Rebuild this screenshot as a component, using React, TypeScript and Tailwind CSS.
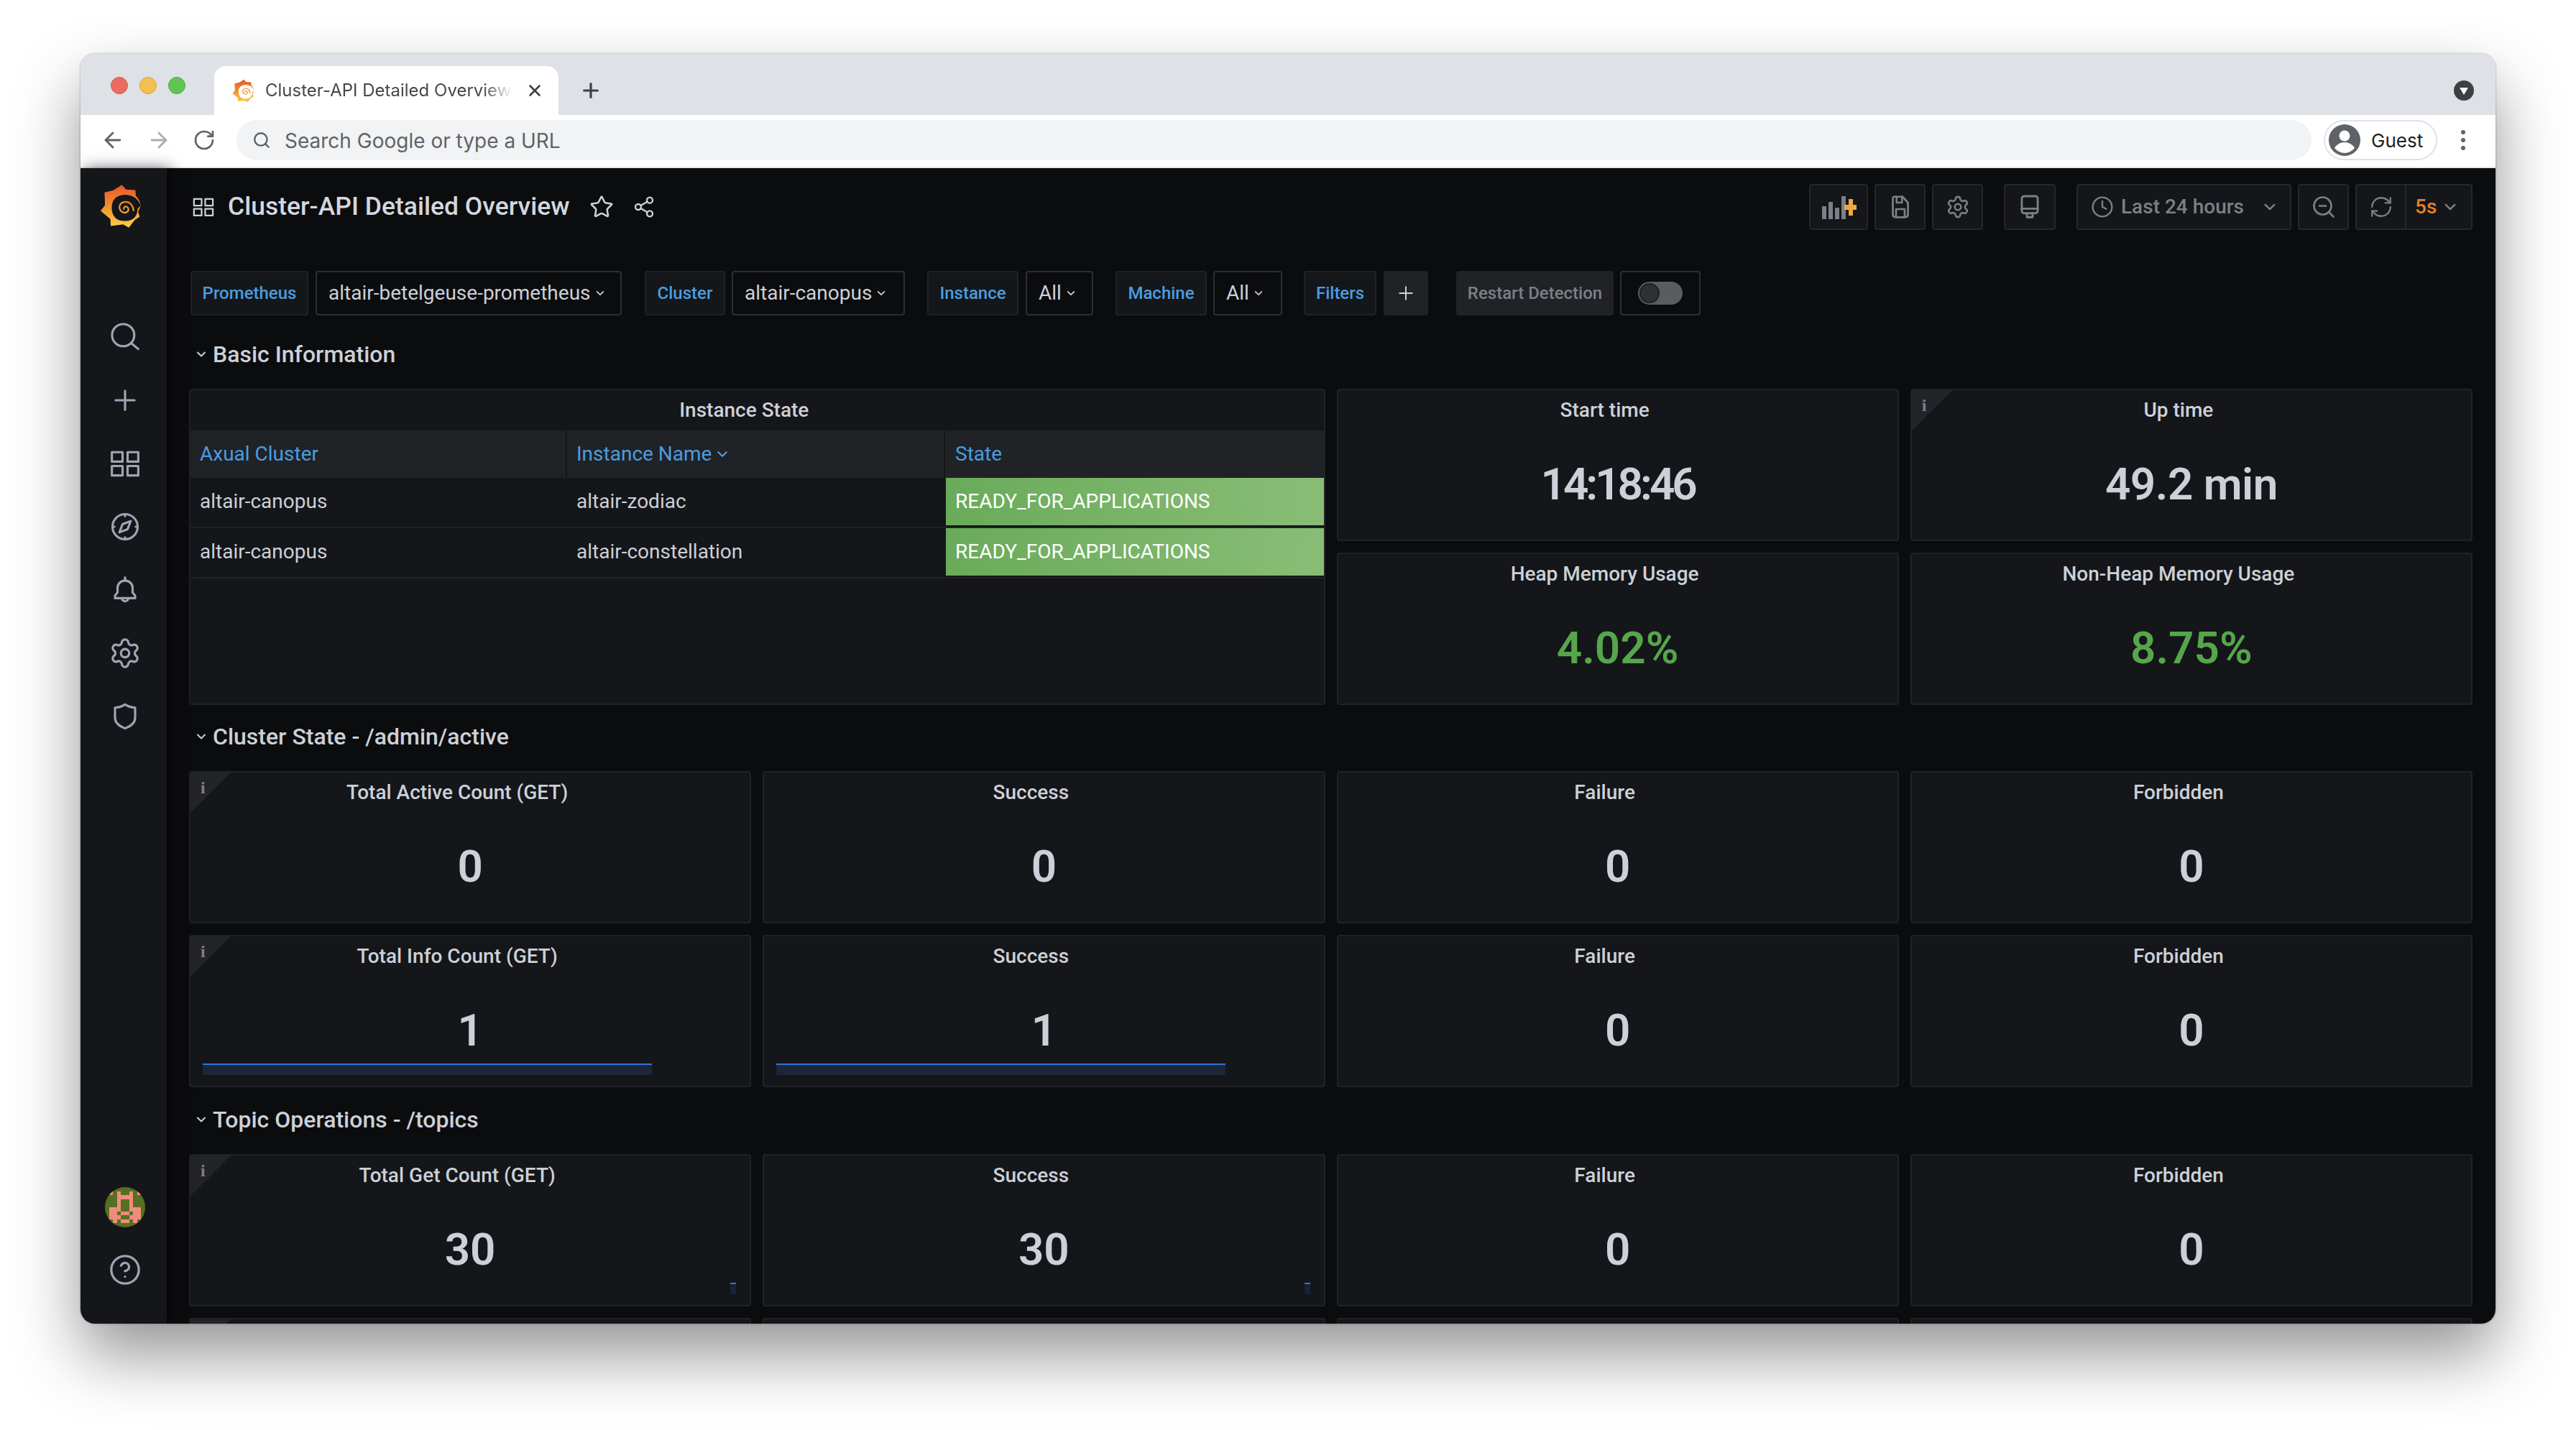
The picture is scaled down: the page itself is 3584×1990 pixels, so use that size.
import { ArrowLeft, ArrowRight, CircleHelp, Clock, Plus, RefreshCw, RotateCw, Search, Settings, Share2, Star, X, ZoomOut } from "lucide-react";

const ROBOTO = "font-['Roboto',sans-serif]";

function Chevron({ className }: { className: string }) {
	return (
		<svg viewBox="0 0 16 16" fill="none" stroke="currentColor" strokeWidth="2" strokeLinecap="round" strokeLinejoin="round" className={className}>
			<polyline points="3,5.5 8,10.5 13,5.5" />
		</svg>
	);
}

function GrafanaLogo({ id, hole, className }: { id: string; hole: string; className: string }) {
	return (
		<svg viewBox="25 45 180 190" className={className}>
			<defs>
				<linearGradient id={id} gradientUnits="userSpaceOnUse" x1="110" y1="50" x2="110" y2="232">
					<stop offset="0" stopColor="#e9582f" />
					<stop offset="0.45" stopColor="#ef8a2c" />
					<stop offset="1" stopColor="#fbd145" />
				</linearGradient>
			</defs>
			<path
				d="M120 48 L138 68 L178 70 L180 95 Q198 112 201 138 L190 165 L197 185 L175 200 L150 232 L125 218 L72 225 L70 195 L28 160 L47 135 L45 80 L82 72 Z"
				fill={`url(#${id})`}
			/>
			<path d="M201 138 Q186 92 134 90 Q76 92 76 148 Q78 204 134 204 Q186 202 188 150 L201 138 Z" fill={hole} />
			<path
				d="M128 152 Q128 138 141 142 Q153 150 145 163 Q131 174 116 161 Q104 146 114 130 Q128 116 150 124 Q167 134 170 158"
				fill="none"
				stroke={`url(#${id})`}
				strokeWidth="7"
				strokeLinecap="round"
			/>
		</svg>
	);
}

// identicon pixels, one string per row
const AVATAR_ROWS = ["..........", ".#.#..#.#.", "...####...", "...#..#...", "...#..#...", ".###..###.", ".##.##.##.", ".###..###.", "..#.##.#..", ".........."];

function Avatar() {
	return (
		<svg viewBox="0 0 10 10" shapeRendering="crispEdges" className="h-[56px] w-[56px] rounded-full bg-[#566f22]">
			{AVATAR_ROWS.map((row, y) =>
				row.split("").map((c, x) => (c === "#" ? <rect key={`${x}-${y}`} x={x} y={y} width="1" height="1" fill="#f08c7d" /> : null)),
			)}
		</svg>
	);
}

function NavIcon({ children }: { children: React.ReactNode }) {
	return <div className="flex h-[88px] w-full items-center justify-center pl-[4px] text-[#9da5b4]">{children}</div>;
}

function StrokeIcon({ children, className }: { children: React.ReactNode; className: string }) {
	return (
		<svg viewBox="0 0 24 24" fill="none" stroke="currentColor" strokeWidth="1.8" strokeLinecap="round" strokeLinejoin="round" className={className}>
			{children}
		</svg>
	);
}

function AppsIcon({ className }: { className: string }) {
	return (
		<StrokeIcon className={className}>
			<rect x="1.5" y="3" width="8.5" height="7.5" />
			<rect x="14" y="3" width="8.5" height="7.5" />
			<rect x="1.5" y="14" width="8.5" height="7.5" />
			<rect x="14" y="14" width="8.5" height="7.5" />
		</StrokeIcon>
	);
}

function Sidebar() {
	return (
		<aside className="relative z-10 flex w-[120px] shrink-0 flex-col bg-[#141619] shadow-[6px_0_20px_rgba(0,0,0,0.55)]">
			<div className="mb-[85px] flex h-[106px] items-center justify-center pr-[8px]">
				<GrafanaLogo id="side-logo" hole="#141619" className="h-[62px] w-[58px]" />
			</div>
			<NavIcon>
				<StrokeIcon className="h-[42px] w-[42px]">
					<circle cx="10.5" cy="10.5" r="8.8" />
					<line x1="17" y1="17" x2="22.5" y2="21.5" />
				</StrokeIcon>
			</NavIcon>
			<NavIcon>
				<StrokeIcon className="h-[42px] w-[42px]">
					<line x1="12" y1="4.5" x2="12" y2="19.5" />
					<line x1="4.5" y1="12" x2="19.5" y2="12" />
				</StrokeIcon>
			</NavIcon>
			<NavIcon>
				<AppsIcon className="h-[42px] w-[42px]" />
			</NavIcon>
			<NavIcon>
				<StrokeIcon className="h-[42px] w-[42px]">
					<circle cx="12" cy="12" r="10" />
					<path d="M16.5 7.5 L14 14 L7.5 16.5 L10 10 Z" />
					<line x1="12" y1="2" x2="12" y2="3.5" />
					<line x1="12" y1="20.5" x2="12" y2="22" />
					<line x1="2" y1="12" x2="3.5" y2="12" />
					<line x1="20.5" y1="12" x2="22" y2="12" />
				</StrokeIcon>
			</NavIcon>
			<NavIcon>
				<StrokeIcon className="h-[42px] w-[42px]">
					<path d="M6 14 V10.5 A6 6 0 0 1 18 10.5 V14 L20 16.5 V18.5 H4 V16.5 Z" />
					<line x1="12" y1="2" x2="12" y2="4.5" />
					<path d="M9.5 18.5 A2.5 2.5 0 0 0 14.5 18.5" />
				</StrokeIcon>
			</NavIcon>
			<NavIcon>
				<Settings className="h-[46px] w-[46px]" strokeWidth={1.7} />
			</NavIcon>
			<NavIcon>
				<StrokeIcon className="h-[42px] w-[42px]">
					<path d="M12 2.5 Q16 5 20 5 V13 Q20 18.5 12 21.5 Q4 18.5 4 13 V5 Q8 5 12 2.5 Z" />
				</StrokeIcon>
			</NavIcon>
			<div className="mt-auto flex h-[86px] items-center justify-center pl-[4px]">
				<Avatar />
			</div>
			<div className="mb-[31px] flex h-[88px] items-center justify-center pl-[4px] text-[#9da5b4]">
				<CircleHelp className="h-[46px] w-[46px]" strokeWidth={1.7} />
			</div>
		</aside>
	);
}

function ToolButton({ className, children }: { className: string; children: React.ReactNode }) {
	return (
		<div className={`flex h-[64px] items-center justify-center rounded-[4px] border-2 border-[#25272b] bg-[#141619] text-[#7b8087] ${className}`}>
			{children}
		</div>
	);
}

function TopBar() {
	return (
		<div className="flex h-[64px] items-center">
			<div className="ml-[5px] flex items-center text-[#ccd0d6]">
				<AppsIcon className="h-[30px] w-[30px]" />
				<h1 className={`ml-[19px] text-[35.5px] font-medium leading-none text-[#d3d7de] ${ROBOTO}`}>Cluster-API Detailed Overview</h1>
				<Star className="ml-[27px] h-[34px] w-[34px]" strokeWidth={1.8} />
				<Share2 className="ml-[26px] h-[32px] w-[32px]" strokeWidth={1.8} />
			</div>
			<div className="ml-auto flex items-center gap-[9px]">
				<ToolButton className="w-[82px]">
					<svg viewBox="0 0 50 34" className="h-[34px] w-[50px]">
						<rect x="2" y="16" width="6" height="18" fill="#7b8087" />
						<rect x="11" y="10" width="6" height="24" fill="#7b8087" />
						<rect x="20" y="18" width="6" height="16" fill="#7b8087" />
						<rect x="29" y="2" width="6" height="32" fill="#7b8087" />
						<path d="M39 6 H45 V14 H50 V21 H45 V29 H39 V21 H33 V14 H39 Z" fill="#f2a73d" />
					</svg>
				</ToolButton>
				<ToolButton className="w-[71px]">
					<StrokeIcon className="h-[36px] w-[36px]">
						<path d="M6.5 2.5 H14 L19 8 V19 Q19 21.5 16.5 21.5 H7.5 Q5 21.5 5 19 V4 Q5 2.5 6.5 2.5 Z" />
						<path d="M8.5 2.5 V8 H13.5 V2.5" />
						<rect x="8" y="14" width="8" height="7.5" />
					</StrokeIcon>
				</ToolButton>
				<ToolButton className="w-[71px]">
					<Settings className="h-[34px] w-[34px]" strokeWidth={1.8} />
				</ToolButton>
				<ToolButton className="ml-[20px] w-[72px]">
					<StrokeIcon className="h-[38px] w-[38px]">
						<rect x="5" y="2.5" width="14" height="15" rx="2" />
						<line x1="5" y1="13.5" x2="19" y2="13.5" />
						<path d="M9.5 17.5 V21 H14.5 V17.5" />
					</StrokeIcon>
				</ToolButton>
				<ToolButton className={`ml-[20px] w-[299px] justify-start pl-[18px] ${ROBOTO}`}>
					<Clock className="h-[32px] w-[32px]" strokeWidth={1.8} />
					<span className="ml-[10px] text-[28px] font-medium">Last 24 hours</span>
					<Chevron className="ml-auto mr-[18px] h-[20px] w-[20px]" />
				</ToolButton>
				<ToolButton className="w-[71px]">
					<ZoomOut className="h-[36px] w-[36px]" strokeWidth={1.8} />
				</ToolButton>
				<div className={`flex h-[64px] w-[163px] items-center rounded-[4px] border-2 border-[#25272b] bg-[#141619] text-[#7b8087] ${ROBOTO}`}>
					<div className="flex h-full w-[69px] items-center justify-center border-r-2 border-[#25272b]">
						<RefreshCw className="h-[34px] w-[34px]" strokeWidth={1.6} />
					</div>
					<span className="ml-[12px] text-[28px] font-medium text-[#e5802a]">5s</span>
					<Chevron className="ml-[9px] h-[20px] w-[20px]" />
				</div>
			</div>
		</div>
	);
}

function VarLabel({ text, className }: { text: string; className: string }) {
	return (
		<div className={`flex h-[62px] items-center justify-center rounded-[4px] border-2 border-[#202226] bg-[#141619] text-[24px] font-medium text-[#4a9de0] ${className}`}>
			{text}
		</div>
	);
}

function VarValue({ text, className }: { text: string; className: string }) {
	return (
		<div className={`flex h-[62px] items-center rounded-[4px] border-2 border-[#2c2e33] bg-[#0b0c0e] pl-[16px] text-[28px] text-[#ccd0d8] ${className}`}>
			{text}
			<Chevron className="ml-[6px] h-[14px] w-[14px]" />
		</div>
	);
}

function Variables() {
	return (
		<div className={`mt-[57px] ml-[2px] flex items-center ${ROBOTO}`}>
			<VarLabel text="Prometheus" className="w-[164px]" />
			<VarValue text="altair-betelgeuse-prometheus" className="ml-[10px] w-[426px]" />
			<VarLabel text="Cluster" className="ml-[32px] w-[112px]" />
			<VarValue text="altair-canopus" className="ml-[9px] w-[241px]" />
			<VarLabel text="Instance" className="ml-[31px] w-[127px]" />
			<VarValue text="All" className="ml-[10px] w-[94px]" />
			<VarLabel text="Machine" className="ml-[31px] w-[127px]" />
			<VarValue text="All" className="ml-[9px] w-[96px]" />
			<VarLabel text="Filters" className="ml-[30px] w-[101px]" />
			<div className="ml-[10px] flex h-[62px] w-[62px] items-center justify-center rounded-[4px] bg-[#202226] text-[#ccd0d8]">
				<Plus className="h-[30px] w-[30px]" strokeWidth={1.6} />
			</div>
			<div className="ml-[39px] flex h-[62px] w-[219px] items-center justify-center rounded-[4px] bg-[#202226] text-[24px] font-medium text-[#7b8087]">
				Restart Detection
			</div>
			<div className="ml-[9px] flex h-[62px] w-[112px] items-center justify-center rounded-[4px] border-2 border-[#2c2e33] bg-[#0b0c0e]">
				<div className="flex h-[32px] w-[62px] items-center rounded-full bg-[#5a5c60] pl-[2px]">
					<div className="h-[28px] w-[28px] rounded-full border-2 border-[#1f2024] bg-[#2e3034]" />
				</div>
			</div>
		</div>
	);
}

function SectionTitle({ title, className }: { title: string; className: string }) {
	return (
		<div className={`flex h-[64px] items-center pl-[9px] ${ROBOTO} ${className}`}>
			<Chevron className="h-[16px] w-[16px] text-[#ccd0d8]" />
			<h2 className="ml-[8px] text-[32px] font-medium text-[#ccd0d8]">{title}</h2>
		</div>
	);
}

type PanelProps = {
	title: string;
	value: string;
	info?: boolean;
	corner?: boolean;
	green?: boolean;
	spark?: "long" | "short";
	valueClass?: string;
};

function Panel({ title, value, info, corner, green, spark, valueClass }: PanelProps) {
	return (
		<div className={`relative flex h-[212px] flex-col rounded-[4px] border-2 border-[#202226] bg-[#141619] ${ROBOTO}`}>
			{(info || corner) && <div className="absolute left-0 top-0 h-0 w-0 border-r-[56px] border-t-[56px] border-r-transparent border-t-[#22242a]" />}
			{info && <span className="absolute left-[14px] top-[9px] font-['Liberation_Serif',serif] text-[24px] font-bold leading-none text-[#7b8087]">i</span>}
			<div className="flex h-[56px] shrink-0 items-center justify-center pr-[36px] text-[28px] font-medium text-[#ccd0d8]">{title}</div>
			<div className={`flex flex-1 items-center justify-center pb-[2px] text-[62px] font-semibold leading-none ${green ? "text-[#56a64b]" : "text-[#ccd0d8]"} ${valueClass ?? ""}`}>
				{value}
			</div>
			{spark === "long" && <div className="absolute bottom-[15px] left-[17px] h-[16px] w-[625px] border-t-2 border-[#3274d9] bg-[#1c2638]" />}
			{spark === "short" && <div className="absolute bottom-[15px] right-[19px] h-[16px] w-[8px] border-t-2 border-[#3274d9] bg-[#16233a]" />}
		</div>
	);
}

const TABLE_ROWS = [
	["altair-canopus", "altair-zodiac"],
	["altair-canopus", "altair-constellation"],
];

function InstanceTable() {
	return (
		<div className={`col-span-2 row-span-2 flex flex-col rounded-[4px] border-2 border-[#202226] bg-[#141619] text-[28px] ${ROBOTO}`}>
			<div className="flex h-[56px] shrink-0 items-center justify-center pr-[36px] text-[28px] font-medium text-[#ccd0d8]">Instance State</div>
			<div className="grid h-[66px] grid-cols-[524px_526px_1fr] bg-[#202226] text-[#4a9de0]">
				<div className="flex items-center border-r-2 border-[#141619] px-[13px]">Axual Cluster</div>
				<div className="flex items-center border-r-2 border-[#141619] px-[13px]">
					Instance Name
					<Chevron className="ml-[6px] h-[18px] w-[18px]" />
				</div>
				<div className="flex items-center px-[14px]">State</div>
			</div>
			{TABLE_ROWS.map(([cluster, name]) => (
				<div key={name} className="grid h-[70px] grid-cols-[524px_526px_1fr] border-b-2 border-[#202226] text-[#ccd0d8]">
					<div className="flex items-center px-[13px] pb-[2px]">{cluster}</div>
					<div className="flex items-center px-[13px] pb-[2px]">{name}</div>
					<div className="mb-[2px] ml-[1px] flex items-center bg-linear-to-r from-[#69ab5a] to-[#89bd76] px-[13px] text-white">READY_FOR_APPLICATIONS</div>
				</div>
			))}
		</div>
	);
}

function PanelRow({ panels }: { panels: PanelProps[] }) {
	return (
		<>
			{panels.map((p, i) => (
				<Panel key={i} {...p} />
			))}
		</>
	);
}

function Dashboard() {
	return (
		<main className="min-w-0 flex-1 overflow-hidden bg-[#0b0c0e] pl-[31px] pr-[32px] pt-[22px]">
			<TopBar />
			<Variables />
			<SectionTitle title="Basic Information" className="mt-[22px] mb-[16px]" />
			<div className="grid grid-cols-4 gap-4">
				<InstanceTable />
				<Panel title="Start time" value="14:18:46" valueClass="tracking-[-4px]" />
				<Panel title="Up time" value="49.2 min" info valueClass="tracking-[-0.5px]" />
				<Panel title="Heap Memory Usage" value="4.02%" green />
				<Panel title="Non-Heap Memory Usage" value="8.75%" green />
			</div>
			<SectionTitle title="Cluster State - /admin/active" className="mt-[12px] mb-[16px]" />
			<div className="grid grid-cols-4 gap-4">
				<PanelRow
					panels={[
						{ title: "Total Active Count (GET)", value: "0", info: true },
						{ title: "Success", value: "0" },
						{ title: "Failure", value: "0" },
						{ title: "Forbidden", value: "0" },
						{ title: "Total Info Count (GET)", value: "1", info: true, spark: "long" },
						{ title: "Success", value: "1", spark: "long" },
						{ title: "Failure", value: "0" },
						{ title: "Forbidden", value: "0" },
					]}
				/>
			</div>
			<SectionTitle title="Topic Operations - /topics" className="mt-[13px] mb-[16px]" />
			<div className="grid grid-cols-4 gap-4">
				<PanelRow
					panels={[
						{ title: "Total Get Count (GET)", value: "30", info: true, spark: "short" },
						{ title: "Success", value: "30", spark: "short" },
						{ title: "Failure", value: "0" },
						{ title: "Forbidden", value: "0" },
						{ title: "", value: "", corner: true },
						{ title: "", value: "" },
						{ title: "", value: "" },
						{ title: "", value: "" },
					]}
				/>
			</div>
		</main>
	);
}

function BrowserChrome() {
	return (
		<div className="shrink-0 font-['Inter',sans-serif]">
			<div className="flex h-[85px] items-end bg-[#dee1e6]">
				<div className="mb-[29px] ml-[42px] flex gap-[16px]">
					<div className="h-[24px] w-[24px] rounded-full border border-[#d4584c] bg-[#ec6a5e]" />
					<div className="h-[24px] w-[24px] rounded-full border border-[#d6a243] bg-[#f5bf4f]" />
					<div className="h-[24px] w-[24px] rounded-full border border-[#52a847] bg-[#61c554]" />
				</div>
				<div className="ml-[40px] flex h-[68px] w-[479px] items-center rounded-t-[16px] bg-white pl-[25px]">
					<GrafanaLogo id="tab-logo" hole="#ffffff" className="h-[33px] w-[31px]" />
					<span className="ml-[15px] w-[344px] overflow-hidden whitespace-nowrap text-[24px] text-[#45474a] [mask-image:linear-gradient(to_right,black_88%,transparent)]">
						Cluster-API Detailed Overview
					</span>
					<X className="ml-[18px] h-[26px] w-[26px] text-[#3c4043]" strokeWidth={2.4} />
				</div>
				<Plus className="mb-[18px] ml-[29px] h-[32px] w-[32px] text-[#3c4043]" strokeWidth={2.4} />
				<div className="mb-[20px] ml-auto mr-[30px] flex h-[28px] w-[28px] items-center justify-center rounded-full bg-[#3c4043]">
					<div className="mt-[2px] h-0 w-0 border-x-[6px] border-t-[10px] border-x-transparent border-t-white" />
				</div>
			</div>
			<div className="flex h-[74px] items-center border-b-2 border-[#e8e9eb] bg-white pb-[2px]">
				<ArrowLeft className="ml-[28px] h-[34px] w-[34px] text-[#5f6368]" strokeWidth={2} />
				<ArrowRight className="ml-[30px] h-[34px] w-[34px] text-[#a9acb1]" strokeWidth={2} />
				<RotateCw className="ml-[30px] h-[32px] w-[32px] text-[#5f6368]" strokeWidth={2} />
				<div className="ml-[29px] flex h-[56px] w-[2887px] items-center rounded-full bg-[#f1f3f4] pl-[22px]">
					<Search className="h-[26px] w-[26px] text-[#5f6368]" strokeWidth={2.2} />
					<span className="ml-[19px] pt-[2px] text-[28px] text-[#5f6368]">Search Google or type a URL</span>
				</div>
				<div className="ml-[17px] flex h-[56px] w-[158px] items-center rounded-full border-2 border-[#dfe1e5] pl-[5px]">
					<svg viewBox="0 0 44 44" className="h-[44px] w-[44px]">
						<circle cx="22" cy="22" r="22" fill="#5f6368" />
						<circle cx="22" cy="16" r="7.5" fill="white" />
						<path d="M8 33 Q13 25 22 25 Q31 25 36 33 Q30 40 22 40 Q14 40 8 33 Z" fill="white" />
					</svg>
					<span className="ml-[15px] text-[26px] text-[#202124]">Guest</span>
				</div>
				<div className="ml-[33px] flex flex-col gap-[5px]">
					<div className="h-[6px] w-[6px] rounded-full bg-[#5f6368]" />
					<div className="h-[6px] w-[6px] rounded-full bg-[#5f6368]" />
					<div className="h-[6px] w-[6px] rounded-full bg-[#5f6368]" />
				</div>
			</div>
		</div>
	);
}

export default function App() {
	return (
		<div className="h-[1990px] w-[3584px] overflow-hidden bg-white pl-[112px] pt-[75px]">
			<div className="flex h-[1767px] w-[3360px] flex-col overflow-hidden rounded-[20px] shadow-[0_44px_90px_rgba(0,0,0,0.42),0_0_3px_rgba(0,0,0,0.35)]">
				<BrowserChrome />
				<div className="flex min-h-0 flex-1">
					<Sidebar />
					<Dashboard />
				</div>
			</div>
		</div>
	);
}
